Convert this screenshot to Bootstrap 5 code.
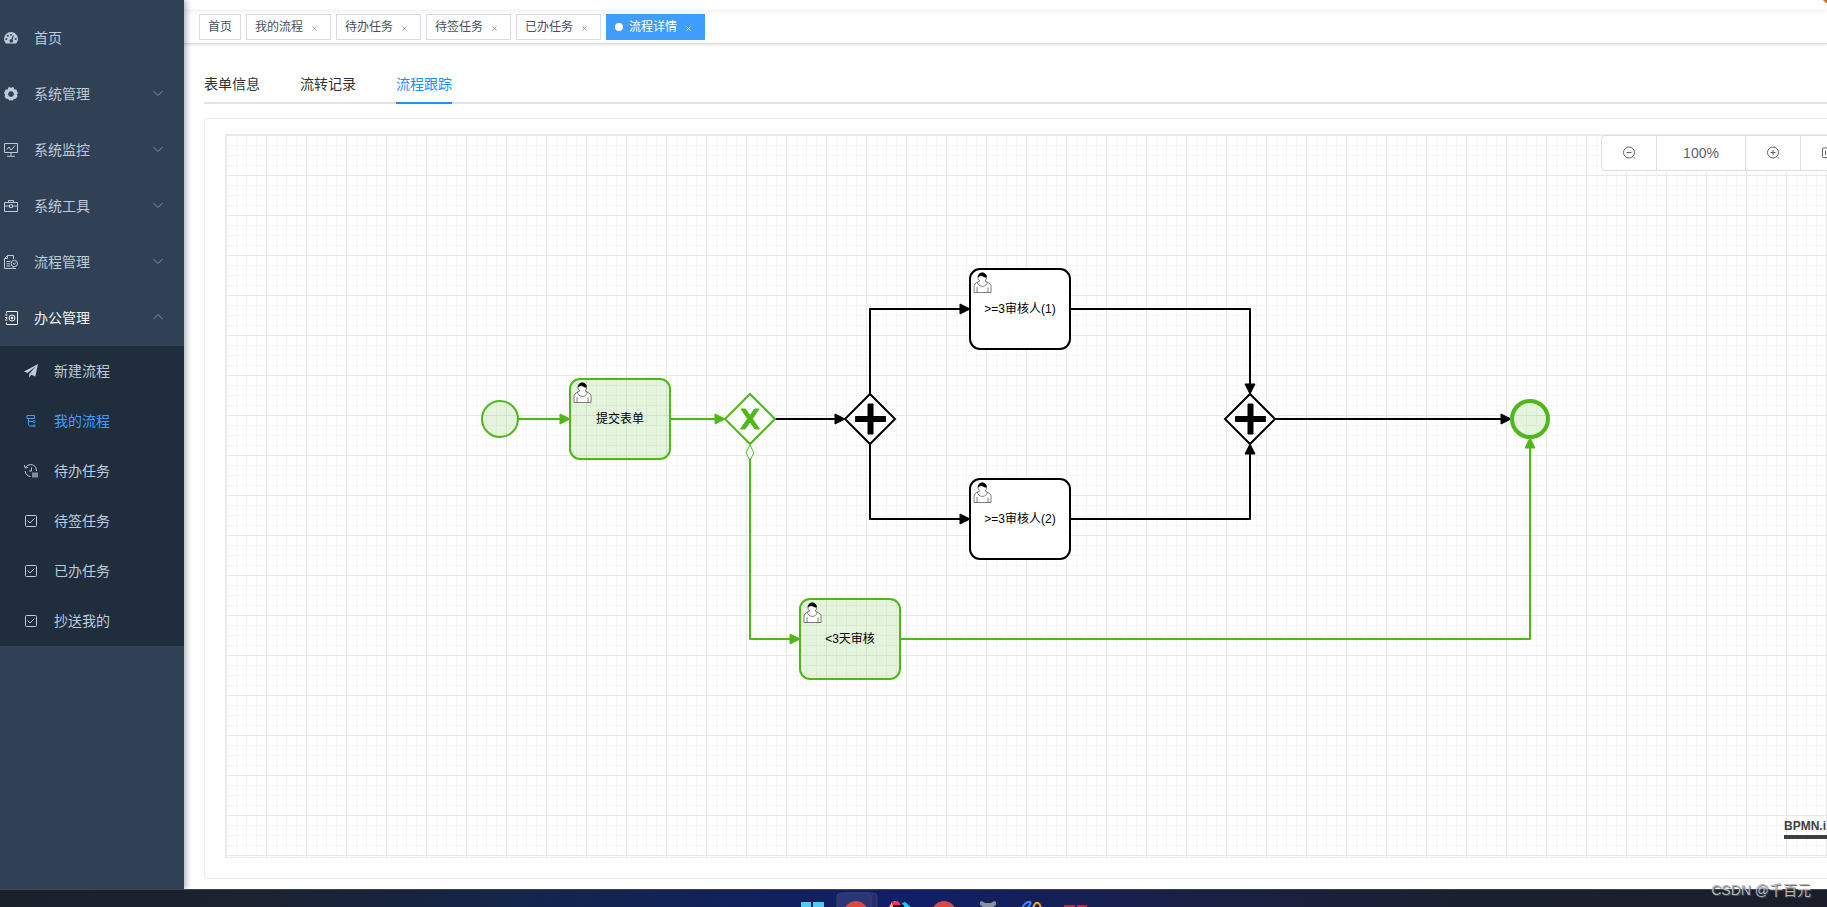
<!DOCTYPE html>
<html lang="zh-CN">
<head>
<meta charset="utf-8">
<meta name="viewport" content="width=device-width, initial-scale=1">
<title>流程详情</title>
<link href="https://cdn.jsdelivr.net/npm/bootstrap@5.3.0/dist/css/bootstrap.min.css" rel="stylesheet">
<style>
  body { font-family: "Liberation Sans", "Noto Sans CJK SC", sans-serif; font-size: 14px; color: #303133; background: #fff; }
  a { text-decoration: none; color: inherit; }
  .side { width: 184px; background: #304156; color: #bfcbd9; box-shadow: 2px 0 6px rgba(0,21,41,.35); z-index: 3; padding-top: 10px; }
  .side-link { height: 56px; padding: 0 20px 0 4px; }
  .side-link .ico { width: 14px; height: 14px; margin-right: 16px; }
  .side-link .arrow { width: 12px; height: 12px; margin-bottom: 3px; color: #86909c; }
  .side-link.open { color: #f4f4f5; }
  .sub { background: #1f2d3d; }
  .sub-link { height: 50px; padding-left: 24px; }
  .sub-link .ico { width: 14px; height: 14px; margin-right: 16px; }
  .sub-link.current { color: #409eff; }
  .ico, .arrow { flex: none; fill: none; stroke: currentColor; }
  .ico .solid { fill: currentColor; stroke: none; }
  .topbar { height: 10px; box-shadow: 0 1px 4px rgba(0,21,41,.08); }
  .avatar { width: 40px; height: 40px; right: -34px; bottom: 6px; border-radius: 10px; background: #b87333; }
  .tags { height: 34px; padding: 4px 15px; gap: 5px; border-bottom: 1px solid #d8dce5; box-shadow: 0 1px 3px rgba(0,0,0,.12); }
  .tag { height: 26px; padding: 0 8px; border: 1px solid #d8dce5; color: #495060; font-size: 12px; background: #fff; }
  .tag.current { background: #409eff; border-color: #409eff; color: #fff; }
  .tag .dot { width: 8px; height: 8px; margin-right: 6px; border-radius: 50%; background: #fff; }
  .tag-close { width: 16px; margin-left: 3px; padding: 0; border: 0; background: none; color: inherit; line-height: 1; opacity: .6; }
  .current .tag-close { opacity: .9; }
  .tag-close svg { width: 5px; height: 5px; display: block; margin: 2px auto 0; stroke: currentColor; }
  .work { padding: 20px 0 10px 20px; }
  .steps { height: 40px; gap: 40px; border-bottom: 2px solid #dfe4ed; margin-bottom: 14px; }
  .steps a { height: 40px; line-height: 40px; border-bottom: 2px solid transparent; }
  .steps a.current { color: #1890ff; border-color: #1890ff; }
  .panel { border: 1px solid #e6ebf5; border-right: 0; border-radius: 4px 0 0 4px; padding: 15px 0 20px 20px; }
  .board { border: 1px solid #ebebeb; border-right: 0; min-height: 600px; }
  .board > svg { position: absolute; inset: 0; width: 100%; height: 100%; }
  .zoombar { top: 0; right: -29px; color: #606266; z-index: 2; }
  .zoombar button, .zoombar output { height: 36px; border: 1px solid #dcdfe6; background: #fff; color: inherit; display: flex; align-items: center; justify-content: center; padding: 0; margin-left: -1px; }
  .zoombar button { width: 56px; }
  .zoombar output { width: 90px; }
  .zoombar button:first-child { border-radius: 4px 0 0 4px; }
  .zoombar svg { width: 14px; height: 14px; fill: none; stroke: currentColor; }
  .maker { right: 0; bottom: 18px; font-size: 12px; font-weight: 700; line-height: 18px; color: #404040; border-bottom: 4px solid #404040; white-space: nowrap; width: 43px; }
  .flow text { font-size: 12px; text-anchor: middle; }
  .done { stroke: #4eb819; fill: #4eb819; }
  .todo { stroke: #000; fill: #000; }
  .flow .edge { fill: none; stroke-width: 2; stroke-linejoin: round; }
  .flow .shape { stroke-width: 2; }
  .flow .shape.ending { stroke-width: 4; }
  .flow .mark { stroke-width: 1; }
  .flow .tip { stroke-width: 1; stroke-linejoin: round; }
  .done .shape { fill-opacity: .15; }
  .done .hollow, .todo .shape { fill: #fff; fill-opacity: 1; }
  .taskbar { height: 18px; z-index: 4; padding-left: 61px; border-top: 1px solid #3d4450; background: linear-gradient(90deg, #1b212b 0, #1b2230 14%, #14264b 28%, #101f68 50%, #191f45 65%, #1b2030 80%, #1b1e2a 100%); }
  .app { width: 44px; height: 17px; flex: none; }
  .app svg { display: block; }
  .sign { right: 16px; bottom: 8px; z-index: 5; font-size: 14px; line-height: 18px; color: #b4b7bb; text-shadow: 1px 1px 1px #555; }
</style>
</head>
<body>
<div class="vh-100 d-flex flex-column overflow-hidden position-relative">
  <div class="d-flex flex-fill overflow-hidden">
    <aside class="side flex-shrink-0">
      <nav aria-label="主菜单">
        <a class="side-link d-flex align-items-center" href="#"><svg class="ico" viewBox="0 0 14 14"><path class="solid" fill-rule="evenodd" d="M1.8 12.6A7 7 0 1 1 12.200 12.600ZM6.200 3.200a.9.9 0 1 0 1.600 0a.9.9 0 0 0-1.600 0ZM2.900 4.300a1 1 0 1 0 1.800 0a1 1 0 0 0-1.800 0ZM1.300 7.900a1 1 0 1 0 2 0a1 1 0 0 0-2 0ZM10.700 7.900a1 1 0 1 0 2 0a1 1 0 0 0-2 0ZM8.900 4.200L7.300 8.200A1.700 1.700 0 1 0 8.500 8.700L10 4.700Z"/></svg><span>首页</span></a>
        <a class="side-link d-flex align-items-center" href="#"><svg class="ico" viewBox="0 0 14 14"><path class="solid" fill-rule="evenodd" d="M4.300 .6L5.500 0L7 1L8.500 0L9.700 .6L10.400 2.400L12.400 2.600L14 6.200L12.900 7.400L13.500 9.500L11.800 11.800L9.700 11.900L8.800 13.600H7.800L7 13L6.200 13.600H5.200L4.300 11.900L2.200 11.800L.5 9.500L1.100 7.400L0 6.200L1.600 2.600L3.600 2.400ZM7 4.200a2.900 2.900 0 1 0 .01 0Z"/></svg><span class="flex-fill">系统管理</span><svg class="arrow" viewBox="0 0 12 12"><path d="M1.500 4L6 8.500L10.500 4"/></svg></a>
        <a class="side-link d-flex align-items-center" href="#"><svg class="ico" viewBox="0 0 14 14"><path d="M.5 .5H13.500V9.500H.5ZM7 9.500V13M3 13.300H11M2.800 6.500L5 4L7 7L11.200 2.500"/></svg><span class="flex-fill">系统监控</span><svg class="arrow" viewBox="0 0 12 12"><path d="M1.500 4L6 8.500L10.500 4"/></svg></a>
        <a class="side-link d-flex align-items-center" href="#"><svg class="ico" viewBox="0 0 14 14"><path d="M.5 3.500H13.500V12.500H.5ZM4.500 3.500V1.500H9.500V3.500M.5 7H5.500M8.500 7H13.500M5.500 5.800H8.500V8.500H5.500Z"/></svg><span class="flex-fill">系统工具</span><svg class="arrow" viewBox="0 0 12 12"><path d="M1.500 4L6 8.500L10.500 4"/></svg></a>
        <a class="side-link d-flex align-items-center" href="#"><svg class="ico" viewBox="0 0 14 14"><path d="M9.500 4V.5H3.500L.5 3.500V13.500H8.500M3.500 .5V3.500H.5M2.500 6.500H6.500M2.500 8.800H6M2.500 11H6.500"/><circle cx="10.300" cy="8.500" r="3.200"/><path d="M9 8L10.300 9.500L11.800 7.500M9 11.500V13.500H12"/></svg><span class="flex-fill">流程管理</span><svg class="arrow" viewBox="0 0 12 12"><path d="M1.500 4L6 8.500L10.500 4"/></svg></a>
        <a class="side-link open d-flex align-items-center" href="#"><svg class="ico" viewBox="0 0 14 14"><path d="M2.500 2.500V.5H13.500V13.500H2.500V11.500M1 4H3.500M1 6.500H3.500M1 9H3.500M2.500 6V8"/><circle cx="8" cy="7" r="3"/><circle class="solid" cx="8" cy="7" r="1.300"/></svg><span class="flex-fill">办公管理</span><svg class="arrow" viewBox="0 0 12 12"><path d="M1.500 8L6 3.500L10.500 8"/></svg></a>
        <div class="sub">
          <a class="sub-link d-flex align-items-center" href="#"><svg class="ico" viewBox="0 0 14 14"><path class="solid" d="M14 0L0 7.500L3.600 9L12 2.300L5.200 9.900V13.700L7.400 10.800L11.300 12.400Z"/></svg><span>新建流程</span></a>
          <a class="sub-link current d-flex align-items-center" href="#"><svg class="ico" viewBox="0 0 14 14"><path d="M3 1.500H10.500V4.500H3ZM4.500 4.500V10.500L5.500 12H9M4.500 7.500H9"/><circle cx="10.200" cy="7.500" r="1"/><circle cx="10.200" cy="11.800" r="1"/></svg><span>我的流程</span></a>
          <a class="sub-link d-flex align-items-center" href="#"><svg class="ico" viewBox="0 0 14 14"><path d="M1.500 3.500C4 -.3 9.500 -.4 11.800 3.500L12.500 7M.3 1L1.200 4L4 3.500M1.200 7C1.500 10 3.500 12.300 6.500 12.500M7.500 3.500V7H5"/><path class="solid" opacity=".6" d="M8 8.500H14V13.500H8Z"/></svg><span>待办任务</span></a>
          <a class="sub-link d-flex align-items-center" href="#"><svg class="ico" viewBox="0 0 14 14"><rect x="1.500" y="1.500" width="11" height="11" rx="1"/><path d="M3.500 6.500L6 9L10.500 4.500"/></svg><span>待签任务</span></a>
          <a class="sub-link d-flex align-items-center" href="#"><svg class="ico" viewBox="0 0 14 14"><rect x="1.500" y="1.500" width="11" height="11" rx="1"/><path d="M3.500 6.500L6 9L10.500 4.500"/></svg><span>已办任务</span></a>
          <a class="sub-link d-flex align-items-center" href="#"><svg class="ico" viewBox="0 0 14 14"><rect x="1.500" y="1.500" width="11" height="11" rx="1"/><path d="M3.500 6.500L6 9L10.500 4.500"/></svg><span>抄送我的</span></a>
        </div>
      </nav>
    </aside>

    <main class="flex-fill d-flex flex-column overflow-hidden">
      <header class="topbar flex-shrink-0 position-relative"><span class="avatar position-absolute"></span></header>
      <div class="tags flex-shrink-0 d-flex">
        <div class="tag d-flex align-items-center"><a href="#">首页</a></div>
        <div class="tag d-flex align-items-center"><a href="#">我的流程</a><button class="tag-close" type="button" aria-label="关闭"><svg viewBox="0 0 6 6"><path d="M.5 .5L5.500 5.500M5.500 .5L.5 5.500"/></svg></button></div>
        <div class="tag d-flex align-items-center"><a href="#">待办任务</a><button class="tag-close" type="button" aria-label="关闭"><svg viewBox="0 0 6 6"><path d="M.5 .5L5.500 5.500M5.500 .5L.5 5.500"/></svg></button></div>
        <div class="tag d-flex align-items-center"><a href="#">待签任务</a><button class="tag-close" type="button" aria-label="关闭"><svg viewBox="0 0 6 6"><path d="M.5 .5L5.500 5.500M5.500 .5L.5 5.500"/></svg></button></div>
        <div class="tag d-flex align-items-center"><a href="#">已办任务</a><button class="tag-close" type="button" aria-label="关闭"><svg viewBox="0 0 6 6"><path d="M.5 .5L5.500 5.500M5.500 .5L.5 5.500"/></svg></button></div>
        <div class="tag current d-flex align-items-center"><span class="dot"></span><a href="#">流程详情</a><button class="tag-close" type="button" aria-label="关闭"><svg viewBox="0 0 6 6"><path d="M.5 .5L5.500 5.500M5.500 .5L.5 5.500"/></svg></button></div>
      </div>

      <section class="work flex-fill d-flex flex-column">
        <nav class="steps flex-shrink-0 d-flex" aria-label="流程详情">
          <a href="#">表单信息</a>
          <a href="#">流转记录</a>
          <a class="current" href="#">流程跟踪</a>
        </nav>
        <div class="panel flex-fill d-flex">
          <div class="board flex-fill position-relative">
            <svg role="img" aria-label="流程图">
              <defs>
                <pattern id="fine" width="10" height="10" patternUnits="userSpaceOnUse"><path d="M0 .5H10M.5 0V10" fill="none" stroke="#f5f5f5"/></pattern>
                <pattern id="coarse" width="40" height="40" patternUnits="userSpaceOnUse"><path d="M0 .5H40M.5 0V40" fill="none" stroke="#e8e8e8"/></pattern>
                <g id="person" stroke="#000" stroke-width=".5">
                  <path fill="#fff" d="m15 12c.909-.845 1.594-2.049 1.594-3.385 0-2.554-1.805-4.622-4.357-4.622-2.552 0-4.288 2.068-4.288 4.622 0 1.348.974 2.562 1.896 3.405-.529.187-5.669 2.097-5.794 4.756v6.718h17v-6.718c0-2.298-5.528-4.595-6.051-4.776zm-8 6l0 5.500m11 0l0-5"/>
                  <path fill="none" d="m17.162 13.009c0 2.447-2.158 4.431-4.821 4.431-2.665 0-4.822-1.981-4.822-4.431"/>
                  <path fill="#000" d="m8.100 8.200c0 0 2.251-2.358 4.274-1.177 2.024 1.181 4.221 1.537 4.124.965-.098-.57-.117-3.791-4.191-4.136-3.572 .001-4.208 3.678-4.207 4.348z"/>
                </g>
                <path id="diamond" d="M25 0L50 25L25 50L0 25Z"/>
                <path id="plus" d="M23 10v12.500h-12.500v5h12.500v12.500h5v-12.500h12.500v-5h-12.500v-12.500z"/>
                <path id="arrowhead" d="M0 0L-10 -5V5Z"/>
              </defs>
              <rect width="100%" height="100%" fill="url(#fine)"/>
              <rect width="100%" height="100%" fill="url(#coarse)"/>
              <g class="flow" transform="translate(-226 -135)">
                <g class="todo">
                  <path class="edge" d="M775 419H845M870 394V309H970M870 444V519H970M1070 309H1250V394M1070 519H1250V444M1275 419H1510"/>
                  <use class="tip" href="#arrowhead" transform="translate(845 419)"/>
                  <use class="tip" href="#arrowhead" transform="translate(970 309)"/>
                  <use class="tip" href="#arrowhead" transform="translate(970 519)"/>
                  <use class="tip" href="#arrowhead" transform="translate(1250 394) rotate(90)"/>
                  <use class="tip" href="#arrowhead" transform="translate(1250 444) rotate(-90)"/>
                  <use class="tip" href="#arrowhead" transform="translate(1511 419)"/>
                  <rect class="shape" x="970" y="269" width="100" height="80" rx="10"/>
                  <rect class="shape" x="970" y="479" width="100" height="80" rx="10"/>
                  <use class="shape" href="#diamond" x="845" y="394"/>
                  <use class="shape" href="#diamond" x="1225" y="394"/>
                  <use class="mark" href="#plus" x="845" y="394"/>
                  <use class="mark" href="#plus" x="1225" y="394"/>
                </g>
                <g class="done">
                  <path class="edge" d="M518 419H570M670 419H725M750 458V639H800M900 639H1530V438"/>
                  <use class="tip" href="#arrowhead" transform="translate(570 419)"/>
                  <use class="tip" href="#arrowhead" transform="translate(725 419)"/>
                  <use class="tip" href="#arrowhead" transform="translate(800 639)"/>
                  <use class="tip" href="#arrowhead" transform="translate(1530 438) rotate(-90)"/>
                  <circle class="shape" cx="500" cy="419" r="18"/>
                  <rect class="shape" x="570" y="379" width="100" height="80" rx="10"/>
                  <rect class="shape" x="800" y="599" width="100" height="80" rx="10"/>
                  <circle class="shape ending" cx="1530" cy="419" r="18"/>
                  <use class="shape hollow" href="#diamond" x="725" y="394"/>
                  <path class="mark hollow" d="M750 445L754 453L750 460L746 453Z"/>
                  <path class="mark" d="M741 409H745.500L750 415.500L754.500 409H759L752.400 418.800L759.500 429H755L750 422L745 429H740.500L747.600 418.800Z"/>
                </g>
                <use href="#person" x="570" y="379"/>
                <use href="#person" x="800" y="599"/>
                <use href="#person" x="970" y="269"/>
                <use href="#person" x="970" y="479"/>
                <text x="620" y="423">提交表单</text>
                <text x="1020" y="313">&gt;=3审核人(1)</text>
                <text x="1020" y="523">&gt;=3审核人(2)</text>
                <text x="850" y="643">&lt;3天审核</text>
              </g>
            </svg>
            <div class="zoombar position-absolute d-flex">
              <button type="button" aria-label="缩小"><svg viewBox="0 0 14 14"><circle cx="7" cy="6.500" r="5.500"/><path d="M4.500 6.500H9.500M11 10.500L13 12.500"/></svg></button>
              <output>100%</output>
              <button type="button" aria-label="放大"><svg viewBox="0 0 14 14"><circle cx="7" cy="6.500" r="5.500"/><path d="M4.500 6.500H9.500M7 4V9M11 10.500L13 12.500"/></svg></button>
              <button type="button" aria-label="还原"><svg viewBox="0 0 14 14"><rect x="1.500" y="2" width="11" height="9.500" rx="1"/><path d="M4.500 4.500V9M9.500 4.500V9M7 5V6M7 7.500V8.500"/></svg></button>
            </div>
            <a class="maker position-absolute" href="#">BPMN.i</a>
          </div>
        </div>
      </section>
    </main>
  </div>

  <footer class="taskbar flex-shrink-0 d-flex justify-content-center overflow-hidden">
    <span class="app"><svg width="44" height="17"><path fill="#55c8f5" d="M11 12H21V17H11ZM23 12H34V17H23Z"/></svg></span>
    <span class="app"><svg width="44" height="17"><rect x="6" y="3" width="37" height="24" rx="4" fill="#262f6c" stroke="#36407a"/><rect x="3" y="3" width="34" height="24" rx="4" fill="#2b3774" stroke="#36407a"/><circle cx="22" cy="23" r="12" fill="#d94b42"/></svg></span>
    <span class="app"><svg width="44" height="17"><path fill="#ffc04d" d="M11 17L14 12L18 11V17Z"/><path fill="#f52d7e" d="M14 12L20 11L23 15H14Z"/><path fill="#21c7e8" d="M24 13L27 12L33 17H26Z"/><path fill="#111" d="M15 15H26V17H15Z"/></svg></span>
    <span class="app"><svg width="44" height="17"><circle cx="22" cy="23" r="12" fill="#d94b42"/></svg></span>
    <span class="app"><svg width="44" height="17"><path fill="#89929c" d="M14 12Q16 10 19 13H25Q28 10 30 12V15L27 17H17L14 15Z"/></svg></span>
    <span class="app"><svg width="44" height="17"><path fill="none" stroke="#4285f4" stroke-width="2" d="M12 18Q16 11 20 12Q22 13 17 18"/><path fill="none" stroke="#f5a623" stroke-width="2" d="M23 18Q25 12 28 13Q30 14 31 18"/></svg></span>
    <span class="app"><svg width="44" height="17"><path fill="#d61f1f" d="M10 15H21V17H10ZM23 15H33V17H23Z"/></svg></span>
  </footer>
  <div class="sign position-absolute">CSDN @千百元</div>
</div>
<script src="https://cdn.jsdelivr.net/npm/bootstrap@5.3.0/dist/js/bootstrap.bundle.min.js"></script>
</body>
</html>
